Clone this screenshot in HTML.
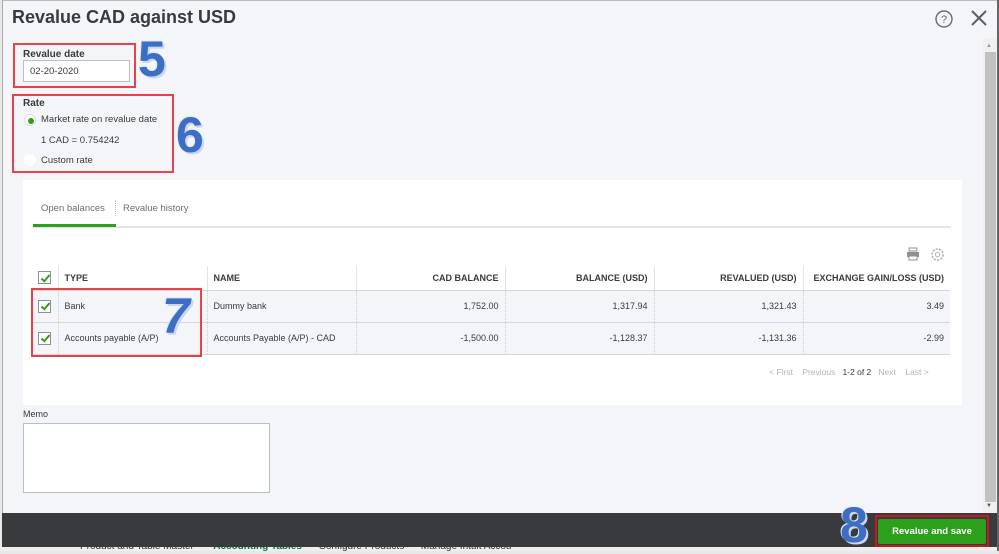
<!DOCTYPE html>
<html><head><meta charset="utf-8"><style>
*{box-sizing:border-box;margin:0;padding:0}
body{width:999px;height:551px;overflow:hidden;background:#e8e8e8;font-family:"Liberation Sans",Arial,sans-serif;position:relative;color:#393a3d}
.abs{position:absolute}
#dlg{left:2px;top:0;width:995px;height:547px;background:#f4f5f8;border-left:1px solid #aaa;border-top:1px solid #bbb}
h1{position:absolute;left:12px;top:7px;font-size:18px;font-weight:bold;color:#393a3d}
.lbl{font-size:10px;font-weight:bold;color:#393a3d}
.sm{font-size:9.5px;color:#393a3d}
.redbox{position:absolute;border:2px solid #e8414a}
.num{position:absolute;font-family:"Liberation Sans",sans-serif;font-weight:bold;color:#3e6ec4;font-size:50px;text-shadow:2px 2px 0 #c8d6f0,-1px -1px 0 #dfe8f8}
table{border-collapse:collapse;position:absolute;left:32px;top:266px;width:918px;font-size:9px}
td,th{height:32px;border-bottom:1.5px solid #d4d7dc;border-right:1px dotted #ccc;padding:0 6px}
th{height:24px;text-align:left;font-weight:bold;background:#fff;border-right:1px solid #e3e3e3;border-bottom:1.5px solid #d4d7dc}
tr.r td{background:#f4f5f8}
.rt{text-align:right}
.cb{width:13px;height:13px;border:1px solid #8d9096;background:#fff;display:inline-block;position:relative;vertical-align:middle}
.cb:after{content:"";position:absolute;left:3.5px;top:0.5px;width:3px;height:7px;border-right:2px solid #2ca01c;border-bottom:2px solid #2ca01c;transform:rotate(40deg)}
</style></head><body>
<div id="dlg" class="abs"></div>
<h1>Revalue CAD against USD</h1>
<svg class="abs" style="left:934px;top:9px" width="20" height="20"><circle cx="10" cy="10" r="8" fill="none" stroke="#6b6c72" stroke-width="1.4"/><text x="10" y="14" font-size="11" text-anchor="middle" fill="#6b6c72" font-family="Liberation Sans">?</text></svg>
<svg class="abs" style="left:970px;top:9px" width="18" height="18"><path d="M2 2L16 16M16 2L2 16" stroke="#5d5e63" stroke-width="2"/></svg>
<div class="abs" style="left:983px;top:38px;width:14px;height:475px;background:#f0f0f0"></div>
<div class="abs" style="left:986px;top:43px;font-size:6px;color:#999">▲</div>
<div class="abs" style="left:985px;top:52px;width:11px;height:450px;background:#c1c1c1"></div>
<div class="abs" style="left:986px;top:503px;font-size:6px;color:#555">▼</div>

<div class="redbox" style="left:13px;top:43px;width:123px;height:45px"></div>
<div class="abs lbl" style="left:23px;top:49px">Revalue date</div>
<div class="abs" style="left:23px;top:60px;width:107px;height:22px;background:#fff;border:1px solid #babec5;font-size:9.5px;padding:5px 6px">02-20-2020</div>
<div class="num" style="left:138px;top:30px">5</div>

<div class="redbox" style="left:12px;top:94px;width:162px;height:79px"></div>
<div class="abs lbl" style="left:23px;top:98px">Rate</div>
<div class="abs" style="left:24px;top:114px;width:12px;height:12px;border-radius:50%;background:#fff;border:1px solid #ddd"><div style="margin:2.5px;width:6px;height:6px;border-radius:50%;background:#2ca01c"></div></div>
<div class="abs sm" style="left:41px;top:114px">Market rate on revalue date</div>
<div class="abs sm" style="left:41px;top:135px">1 CAD = 0.754242</div>
<div class="abs" style="left:24px;top:154px;width:12px;height:12px;border-radius:50%;background:#fff"></div>
<div class="abs sm" style="left:41px;top:155px">Custom rate</div>
<div class="num" style="left:176px;top:106px">6</div>

<div class="abs" style="left:23px;top:180px;width:939px;height:225px;background:#fff"></div>
<div class="abs sm" style="left:41px;top:203px;color:#6b6c72">Open balances</div>
<div class="abs" style="left:115px;top:200px;height:16px;border-left:1px dotted #bbb"></div>
<div class="abs sm" style="left:123px;top:203px;color:#6b6c72">Revalue history</div>
<div class="abs" style="left:33px;top:226px;width:918px;height:2px;background:#e3e5e8"></div>
<div class="abs" style="left:33px;top:224px;width:83px;height:3px;background:#2ca01c"></div>
<svg class="abs" style="left:906px;top:247px" width="14" height="14"><rect x="3" y="1" width="8" height="3" fill="none" stroke="#8d9096"/><rect x="1" y="5" width="12" height="5" fill="#8d9096"/><rect x="3" y="9" width="8" height="4" fill="#fff" stroke="#8d9096"/></svg>
<svg class="abs" style="left:930px;top:247px" width="15" height="15"><circle cx="7.5" cy="7.5" r="5.5" fill="none" stroke="#b0b3b8" stroke-width="1.6" stroke-dasharray="2.2 1.2"/><circle cx="7.5" cy="7.5" r="2.2" fill="none" stroke="#b0b3b8"/></svg>

<table>
<tr><th style="width:26px;padding:0 0 0 6px"><span class="cb"></span></th><th style="width:149px">TYPE</th><th style="width:149px">NAME</th><th class="rt" style="width:149px">CAD BALANCE</th><th class="rt" style="width:149px">BALANCE (USD)</th><th class="rt" style="width:149px">REVALUED (USD)</th><th class="rt" style="border-right:none">EXCHANGE GAIN/LOSS (USD)</th></tr>
<tr class="r"><td style="padding:0 0 0 6px"><span class="cb"></span></td><td>Bank</td><td>Dummy bank</td><td class="rt">1,752.00</td><td class="rt">1,317.94</td><td class="rt">1,321.43</td><td class="rt" style="border-right:none">3.49</td></tr>
<tr class="r"><td style="padding:0 0 0 6px"><span class="cb"></span></td><td>Accounts payable (A/P)</td><td>Accounts Payable (A/P) - CAD</td><td class="rt">-1,500.00</td><td class="rt">-1,128.37</td><td class="rt">-1,131.36</td><td class="rt" style="border-right:none">-2.99</td></tr>
</table>
<div class="redbox" style="left:31px;top:288px;width:171px;height:69px"></div>
<div class="num" style="left:162px;top:287px;font-style:italic">7</div>

<div class="abs" style="left:769px;top:367px;font-size:8.5px;color:#b0b3b8;white-space:nowrap">&lt; First &nbsp;&nbsp; Previous &nbsp; <span style="color:#393a3d">1-2 of 2</span> &nbsp; Next &nbsp;&nbsp; Last &gt;</div>

<div class="abs lbl" style="left:23px;top:409px;font-weight:normal;font-size:9px">Memo</div>
<div class="abs" style="left:23px;top:423px;width:247px;height:70px;background:#fff;border:1px solid #babec5"></div>

<div class="abs" style="left:2px;top:513px;width:995px;height:34px;background:#393a3e"></div>
<div class="abs" style="left:0;top:547px;width:999px;height:4px;background:#eee;overflow:hidden"><div style="position:absolute;left:80px;top:-6px;font-size:10px;color:#333;white-space:nowrap">Product and Table Master &nbsp;&nbsp;&nbsp;&nbsp;&nbsp; <span style="color:#0a7a3b;font-weight:bold">Accounting Tables</span> &nbsp;&nbsp;&nbsp;&nbsp; Configure Products &nbsp;&nbsp;&nbsp;&nbsp; Manage Intuit Accou</div></div>
<div class="abs" style="left:997px;top:0;width:2px;height:551px;background:#666"></div>
<div class="redbox" style="left:875px;top:515px;width:114px;height:32px;border-color:#c8181e"></div>
<div class="abs" style="left:878px;top:519px;width:108px;height:25px;background:#2ca01c;border-radius:2px;color:#fff;font-size:9.5px;font-weight:bold;text-align:center;line-height:25px">Revalue and save</div>
<div class="num" style="left:840px;top:496px">8</div>
</body></html>
